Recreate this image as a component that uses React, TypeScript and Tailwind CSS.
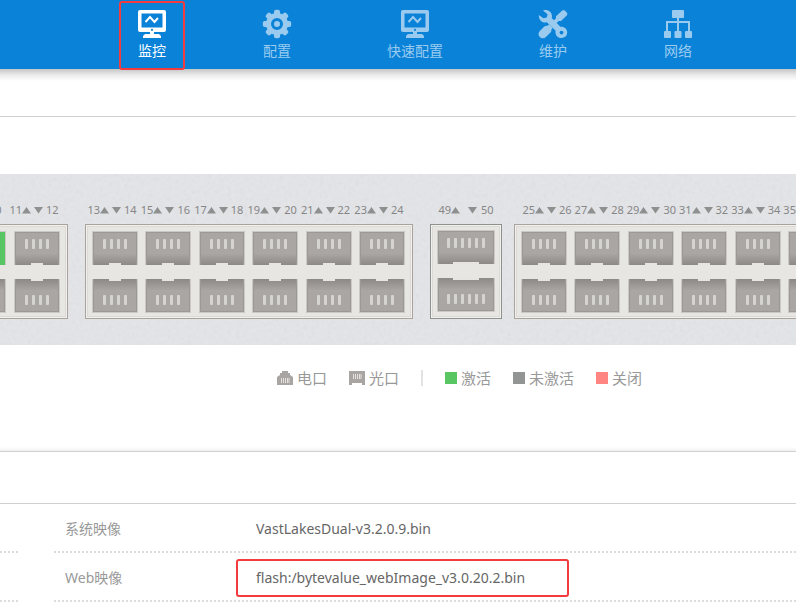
import React from 'react';
import clsx from 'clsx';

type IconName = 'monitor' | 'gear' | 'tools' | 'network';

const NAV: { label: string; icon: IconName; active?: boolean }[] = [
  { label: '监控', icon: 'monitor', active: true },
  { label: '配置', icon: 'gear' },
  { label: '快速配置', icon: 'monitor' },
  { label: '维护', icon: 'tools' },
  { label: '网络', icon: 'network' },
];

const IMAGES = [
  { id: 'sys', label: '系统映像', value: 'VastLakesDual-v3.2.0.9.bin' },
  { id: 'web', label: 'Web映像', value: 'flash:/bytevalue_webImage_v3.0.20.2.bin', marked: true },
];

const TEETH = [0, 45, 90, 135, 180, 225, 270, 315];

const NavIcon: React.FC<{ name: IconName }> = ({ name }) => (
  <svg width="30" height="30" viewBox="0 0 30 30" fill="currentColor" aria-hidden="true">
    {name === 'monitor' && (
      <>
        <path d="M3 1h24a2 2 0 0 1 2 2v18a2 2 0 0 1-2 2H3a2 2 0 0 1-2-2V3a2 2 0 0 1 2-2z" />
        <path d="M4.500 4.500h21v14h-21z" fill="#0a82d8" />
        <circle cx="15" cy="20.800" r="1.100" fill="#0a82d8" />
        <path d="M8.500 13l4.500-5 4.500 5 3.500-4" fill="none" stroke="currentColor" strokeWidth="2" />
        <path d="M13 23h4v2h3.500a3 3 0 0 1 3.500 2.500V29H6v-1.500A3 3 0 0 1 9.500 25H13z" />
      </>
    )}
    {name === 'gear' && (
      <>
        {TEETH.map((a) => (
          <rect key={a} x="12" y="0.800" width="6" height="7" rx="2" transform={`rotate(${a} 15 15)`} />
        ))}
        <path
          fillRule="evenodd"
          d="M15 4a11 11 0 1 0 0 22a11 11 0 0 0 0-22zM15 9a6 6 0 1 1 0 12a6 6 0 0 1 0-12z"
        />
        <circle cx="15" cy="15" r="3" />
      </>
    )}
    {name === 'tools' && (
      <>
        <path d="M5 1.500c4.500-1.500 8.800 1.200 9 5.500 0 .9-.1 1.300-.3 2.100l8.700 8.600c3.700-.5 6.800 2 6.800 5.600a5.900 5.900 0 0 1-11.600 1.300c-.3-1.100-.2-2 .1-2.900L8.900 13.300C4.600 14.600.8 11.500.8 6l4.700 3.300 3.300-.9.800-3.200z" />
        <circle cx="23.500" cy="23.600" r="1.900" fill="#0a82d8" />
        <path d="M24.500 1.200h2L29.200 4v2l-6.200 6h-2.300l-3.200 3.200-2.700-2.700L18 9.300V7.200z" />
        <path d="M11 15.300l3.700 3.700-1.300 1.400c.2 1.600-.4 2.600-1.500 3.700l-4 4a4.300 4.300 0 0 1-6.100-6.100l4-4c1.100-1.100 2.300-1.500 3.900-1.300z" />
      </>
    )}
    {name === 'network' && (
      <>
        <rect x="9" y="1" width="12" height="8" rx="1" />
        <path d="M4 22v-9h22v9M15 9v13" fill="none" stroke="currentColor" strokeWidth="2" />
        <rect x="1" y="22" width="7" height="7" rx="1" />
        <rect x="11.500" y="22" width="7" height="7" rx="1" />
        <rect x="22" y="22" width="7" height="7" rx="1" />
      </>
    )}
  </svg>
);

// A socket with its latch at the bottom; the lower row is the same drawing flipped
const Jack: React.FC<{ wide?: boolean; flip?: boolean; on?: boolean }> = ({ wide, flip, on }) => {
  const w = wide ? 58 : 46;
  const pins = wide ? 6 : 4;
  const pitch = wide ? 7 : 7;
  const latch = wide ? 26 : 12;
  const first = Math.round((w - (pins * pitch - 4)) / 2);

  return (
    <svg width={w} height="34" viewBox={`0 0 ${w} 34`} className={clsx('block', flip && '-scale-y-100')} aria-hidden="true">
      <rect width={w} height="34" fill="#cbc9c6" />
      <rect x="1" y="1" width={w - 2} height="33" fill={on ? '#58c763' : '#aaa6a3'} />
      {!on && (
        <>
          <rect x="1" y="1" width={w - 2} height="33" fill="url(#jackShade)" />
          <path d={`M1.500 34V1.500H${w - 1.5}V34`} fill="none" stroke="#9b9895" />
          {Array.from({ length: pins }, (_, i) => (
            <rect key={i} x={first + i * pitch} y="8" width="3" height="10" rx="1" fill="#d6d4d1" />
          ))}
          <rect x={(w - latch) / 2} y="32" width={latch} height="2" fill="#e6e5e2" />
        </>
      )}
    </svg>
  );
};

const Arrow: React.FC<{ down?: boolean }> = ({ down }) => (
  <svg width="9" height="8" viewBox="0 0 9 8" fill="#8e908f" aria-hidden="true">
    <path d={down ? 'M0 1h9L4.500 7.500z' : 'M0 7.500h9L4.500 1z'} />
  </svg>
);

interface GroupProps {
  first: number;
  columns: number;
  className: string;
  labelClass: string;
  wide?: boolean;
  on?: number[];
}

const PortGroup: React.FC<GroupProps> = ({ first, columns, className, labelClass, wide, on = [] }) => {
  const starts = Array.from({ length: columns }, (_, i) => first + i * 2);

  return (
    <div className={clsx('shrink-0', className)}>
      <div className={clsx('flex h-4 justify-between text-[11px] leading-4 text-[#868686]', labelClass)}>
        {starts.map((n) => (
          <div key={n} className={clsx('flex items-center justify-center whitespace-nowrap', wide ? 'w-14' : 'w-[50px]')}>
            <span>{n}</span>
            <span className={clsx('flex', wide ? 'mr-1 gap-2' : 'mr-[3px] gap-[3px]')}>
              <Arrow />
              <Arrow down />
            </span>
            <span>{n + 1}</span>
          </div>
        ))}
      </div>
      <div
        className={clsx(
          'mt-1.5 flex h-[95px] items-center justify-between border bg-[#e7e6e3] shadow-[inset_0_0_0_1px_#f1f0ee,inset_0_0_0_2px_#dcdad7]',
          wide ? 'border-[#8f918c] px-1.5 pb-0.5' : 'border-[#aaa39b] pr-[7px] pl-1.5',
        )}
      >
        {starts.map((n) => (
          <div key={n} className="flex flex-col gap-3.5">
            <Jack wide={wide} on={on.includes(n)} />
            <Jack wide={wide} flip on={on.includes(n + 1)} />
          </div>
        ))}
      </div>
    </div>
  );
};

const Swatch: React.FC<{ color: string; label: string }> = ({ color, label }) => (
  <li className="flex items-center gap-1">
    <span className={clsx('size-3', color)} />
    {label}
  </li>
);

export default function App() {
  return (
    <div className="min-h-screen overflow-hidden bg-white font-['Noto_Sans','Noto_Sans_CJK_SC',sans-serif] text-[14px]">
      <header className="bg-[#0a82d8]">
        <nav className="flex gap-[95px] pl-[137px]">
          {NAV.map((item) => (
            <a
              key={item.label}
              href="#"
              className={clsx(
                'relative flex h-[69px] flex-col items-center pt-[9px] leading-5 whitespace-nowrap',
                item.active ? 'text-white' : 'text-[#9acbef]',
              )}
            >
              <NavIcon name={item.icon} />
              <span className="mt-0.5">{item.label}</span>
              {item.active && (
                <span className="absolute -inset-x-[18px] top-px -bottom-px rounded-[3px] border-2 border-[#f43c3f]" />
              )}
            </a>
          ))}
        </nav>
      </header>

      <div className="h-12 border-b border-[#d2d2d2]">
        <div className="h-3 bg-linear-to-b from-[#c6c6c6] via-[#ebebeb] to-white" />
      </div>

      <section className="relative mt-[57px] h-[171px] overflow-hidden bg-[#e4e5e8]">
        <svg className="absolute inset-0 size-full opacity-10" aria-hidden="true">
          <defs>
            <linearGradient id="jackShade" x1="0" y1="0" x2="0" y2="1">
              <stop offset="0.65" stopColor="#6f6c6a" stopOpacity="0" />
              <stop offset="1" stopColor="#6f6c6a" stopOpacity="0.5" />
            </linearGradient>
            <filter id="grain">
              <feTurbulence type="fractalNoise" baseFrequency="0.25" numOctaves="2" />
              <feColorMatrix type="saturate" values="0" />
            </filter>
          </defs>
          <rect width="100%" height="100%" filter="url(#grain)" />
        </svg>
        <div className="relative -ml-[47px] flex pt-7">
          <PortGroup first={9} columns={2} className="w-[115px]" labelClass="pr-[9px] pl-0.5" on={[9]} />
          <PortGroup first={13} columns={6} className="ml-[17px] w-[328px]" labelClass="pr-[9px] pl-0.5" />
          <PortGroup first={49} columns={1} className="ml-[17px] w-[72px]" labelClass="justify-center" wide />
          <PortGroup first={25} columns={6} className="ml-3 w-[328px]" labelClass="pr-[9px] pl-2" />
        </div>
      </section>

      <ul className="mt-[22px] flex h-[22px] items-center gap-[22px] pl-[277px] text-[15px] leading-[22px] whitespace-nowrap text-[#999]">
        <li className="flex items-center gap-1">
          <svg width="16" height="14" viewBox="0 0 16 14" fill="#a8a5a3" aria-hidden="true">
            <path d="M5 0h6v2h2v2l3 2v8H0V6l3-2V2h2z" />
            <path d="M4.500 7v5M6.500 7v5M8.500 7v5M10.500 7v5M12 7v5" stroke="#e4e3e2" />
          </svg>
          电口
        </li>
        <li className="flex items-center gap-1">
          <svg width="16" height="14" viewBox="0 0 16 14" fill="#a8a5a3" aria-hidden="true">
            <path d="M0 0h16v14h-3v-2H3v2H0z" />
            <path d="M4.500 3v5M6.500 3v5M8.500 3v5M10.500 3v5M12 3v5" stroke="#e4e3e2" />
          </svg>
          光口
        </li>
        <li className="h-4 w-0.5 bg-[#e2e2e2]" aria-hidden="true" />
        <Swatch color="bg-[#58c763]" label="激活" />
        <Swatch color="bg-[#939594]" label="未激活" />
        <Swatch color="bg-[#ff8583]" label="关闭" />
      </ul>

      <div className="mt-[58px] h-1 bg-linear-to-b from-white to-[#f1f1f1]" />
      <div className="h-[53px] border-y border-[#d0d0d0]" />

      <div className="flex gap-9">
        <div className="w-[18px] shrink-0">
          {IMAGES.map((row) => (
            <div key={row.id} className="h-[49px] border-b-2 border-dotted border-[#dcdcdc]" />
          ))}
        </div>
        <dl className="grow leading-5">
          {IMAGES.map((row) => (
            <div key={row.id} className="flex h-[49px] items-center border-b-2 border-dotted border-[#dcdcdc] pt-0.5 pl-[11px]">
              <dt className="w-[191px] text-[#999]">{row.label}</dt>
              <dd className="relative text-[#666]">
                {row.value}
                {row.marked && (
                  <span className="absolute -inset-y-[9px] -right-11 -left-5 rounded-[3px] border-2 border-[#f43c3f]" />
                )}
              </dd>
            </div>
          ))}
        </dl>
      </div>
    </div>
  );
}
